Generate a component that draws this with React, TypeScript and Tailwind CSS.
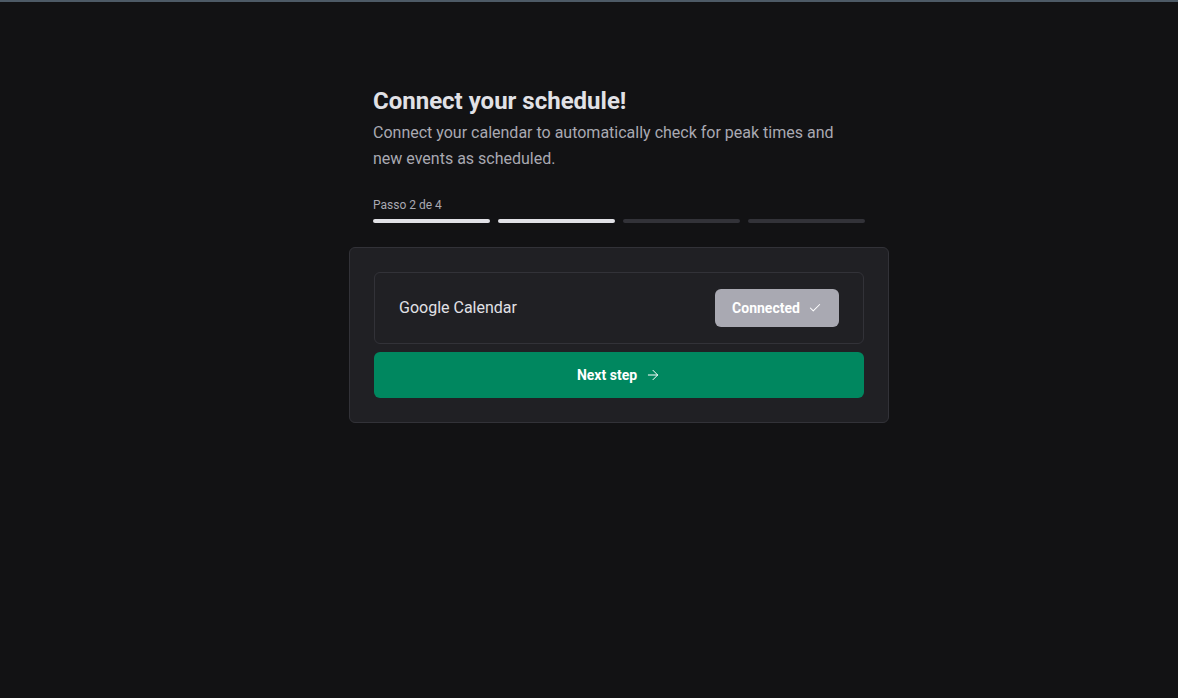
import { ArrowRight, Check } from 'lucide-react'

const STEPS = [true, true, false, false]

export default function App() {
  return (
    <div className="min-h-[698px] bg-[#121214] border-t-2 border-[#4d5a66] font-['Roboto','Inter',sans-serif] antialiased">
      <div className="flex justify-center pl-[60px] pt-[84px]">
        <div className="w-[540px]">
          <div className="px-6">
            <h1 className="text-2xl leading-[30px] font-bold text-[#e1e1e6]">Connect your schedule!</h1>
            <p className="mt-1 text-base leading-[26px] text-[#a9a9b2]">
              Connect your calendar to automatically check for peak times and new events as scheduled.
            </p>

            <div className="mt-[25px]">
              <span className="block text-xs leading-[16px] text-[#a9a9b2]">Passo 2 de 4</span>
              <div className="mt-[6px] grid grid-cols-4 gap-2">
                {STEPS.map((done, i) => (
                  <div key={i} className={done ? 'h-1 rounded-[2px] bg-[#e1e1e6]' : 'h-1 rounded-[2px] bg-[#323238]'} />
                ))}
              </div>
            </div>
          </div>

          <div className="mt-6 rounded-md border border-[#323238] bg-[#202024] p-6 flex flex-col gap-2">
            <div className="h-[72px] rounded-md border border-[#323238] flex items-center justify-between pl-6 pr-6">
              <span className="text-base text-[#e1e1e6]">Google Calendar</span>
              <div className="h-[38px] w-[124px] rounded-md bg-[#a9a9b2] flex items-center justify-center gap-2 text-sm font-bold text-white">
                Connected
                <Check size={14} strokeWidth={1.75} />
              </div>
            </div>
            <button className="h-[46px] rounded-md bg-[#00875f] flex items-center justify-center gap-2 text-sm font-bold text-white">
              Next step
              <ArrowRight size={16} strokeWidth={1.5} />
            </button>
          </div>
        </div>
      </div>
    </div>
  )
}
